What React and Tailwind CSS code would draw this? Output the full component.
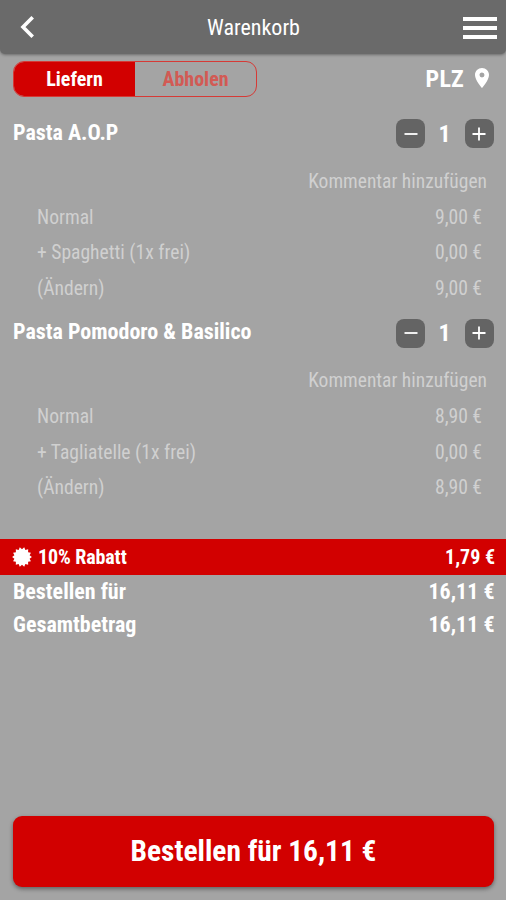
import { useState } from "react";
import { MdLocationOn } from "react-icons/md";

const cartItems = [
  {
    id: 1,
    name: "Pasta A.O.P",
    quantity: 1,
    rows: [
      { label: "Normal", price: "9,00 €" },
      { label: "+ Spaghetti (1x frei)", price: "0,00 €" },
      { label: "(Ändern)", price: "9,00 €" },
    ],
  },
  {
    id: 2,
    name: "Pasta Pomodoro & Basilico",
    quantity: 1,
    rows: [
      { label: "Normal", price: "8,90 €" },
      { label: "+ Tagliatelle (1x frei)", price: "0,00 €" },
      { label: "(Ändern)", price: "8,90 €" },
    ],
  },
];

// points of the discount seal, alternating between outer and inner radius
const sealPoints = Array.from({ length: 28 }, (_, i) => {
  const radius = i % 2 === 0 ? 9.9 : 7.8;
  const angle = ((i + 1) * Math.PI) / 14;
  return `${10 + radius * Math.sin(angle)},${10 - radius * Math.cos(angle)}`;
}).join(" ");

const SealIcon = () => (
  <svg viewBox="0 0 20 20" className="size-5" fill="currentColor">
    <polygon points={sealPoints} />
  </svg>
);

const Header = () => (
  <header className="flex h-[54px] shrink-0 items-center justify-between rounded-b-[5px] bg-[#6a6a6a] pr-[9px] pl-5 shadow-[0_1px_3px_rgba(0,0,0,0.35)]">
    <button className="w-[34px]">
      <svg viewBox="0 0 14 22" className="h-[22px] w-3.5" fill="none" stroke="currentColor" strokeWidth="3.6">
        <path d="M12.7 1.3 3 11l9.7 9.7" />
      </svg>
    </button>
    <h1 className="pr-[10px] text-[22px]">Warenkorb</h1>
    <button className="flex w-[34px] flex-col gap-[5px] pt-px">
      <span className="h-1 w-full bg-white" />
      <span className="h-1 w-full bg-white" />
      <span className="h-1 w-full bg-white" />
    </button>
  </header>
);

const QuantityButton = ({ plus, onClick }) => (
  <button
    onClick={onClick}
    className="flex size-[29px] items-center justify-center rounded-[8px] bg-[#646464]"
  >
    <svg viewBox="0 0 14 14" className="size-3.5" stroke="currentColor" strokeWidth="1.8">
      <path d={plus ? "M.5 7h13M7 .5v13" : "M.5 7h13"} />
    </svg>
  </button>
);

const CartItem = ({ item }) => {
  const [quantity, setQuantity] = useState(item.quantity);

  return (
    <section className="h-[199.5px]">
      <div className="flex h-9 items-center justify-between pr-3 pl-[13px]">
        <h2 className="pb-[3px] text-[22px] font-bold">{item.name}</h2>
        <div className="flex w-[98px] items-center justify-between">
          <QuantityButton onClick={() => setQuantity(Math.max(0, quantity - 1))} />
          <span className="pr-px text-2xl font-bold">{quantity}</span>
          <QuantityButton plus onClick={() => setQuantity(quantity + 1)} />
        </div>
      </div>
      <p className="mt-3 h-9 pr-[19px] text-right text-[19.5px] leading-9 text-[#d0d0d0]">
        Kommentar hinzufügen
      </p>
      {item.rows.map((row) => (
        <div
          key={row.label}
          className="flex h-[35.5px] items-center justify-between pr-6 pl-[37px] text-[19.6px] text-[#d0d0d0]"
        >
          <span>{row.label}</span>
          <span>{row.price}</span>
        </div>
      ))}
    </section>
  );
};

export default function App() {
  const [delivery, setDelivery] = useState(true);
  const active = "bg-[#d20000] text-white";
  const inactive = "text-[#d25a54]";

  return (
    <div className="flex h-[900px] w-full flex-col overflow-hidden bg-[#a4a4a4] font-['Roboto_Condensed','Roboto',sans-serif] text-white">
      <Header />
      <div className="mt-[7px] flex h-9 shrink-0 items-center justify-between pr-3 pl-[13px]">
        <div className="flex h-9 w-[244px] overflow-hidden rounded-[11px] border border-[#d63a36] text-xl font-bold">
          <button
            onClick={() => setDelivery(true)}
            className={`w-[121px] ${delivery ? active : inactive}`}
          >
            Liefern
          </button>
          <button
            onClick={() => setDelivery(false)}
            className={`flex-1 ${delivery ? inactive : active}`}
          >
            Abholen
          </button>
        </div>
        <div className="flex items-center gap-1.5 text-2xl font-bold">
          <span className="tracking-[0.2px]">PLZ</span>
          <MdLocationOn className="size-6 -translate-y-px" />
        </div>
      </div>

      <main className="mt-[18.5px]">
        {cartItems.map((item) => (
          <CartItem key={item.id} item={item} />
        ))}
      </main>

      <div className="mt-[24.5px] flex h-9 shrink-0 items-center justify-between bg-[#d20000] px-3 text-xl font-bold">
        <div className="flex items-center gap-1.5">
          <SealIcon />
          <span className="tracking-[-0.1px]">10% Rabatt</span>
        </div>
        <span className="-mr-px">1,79 €</span>
      </div>
      <div className="flex h-[33px] shrink-0 items-center justify-between pr-[11.5px] pl-[13px] text-[22px] font-bold">
        <span>Bestellen für</span>
        <span>16,11 €</span>
      </div>
      <div className="flex h-[33px] shrink-0 items-center justify-between pr-[11.5px] pl-[13px] text-[22px] font-bold">
        <span>Gesamtbetrag</span>
        <span>16,11 €</span>
      </div>

      <button className="mx-[13px] mt-auto mb-[13px] h-[71px] w-[481px] shrink-0 rounded-[9px] bg-[#d20000] pb-px text-[29.4px] font-bold shadow-[0_2px_4px_rgba(0,0,0,0.4)]">
        Bestellen für 16,11 €
      </button>
    </div>
  );
}
